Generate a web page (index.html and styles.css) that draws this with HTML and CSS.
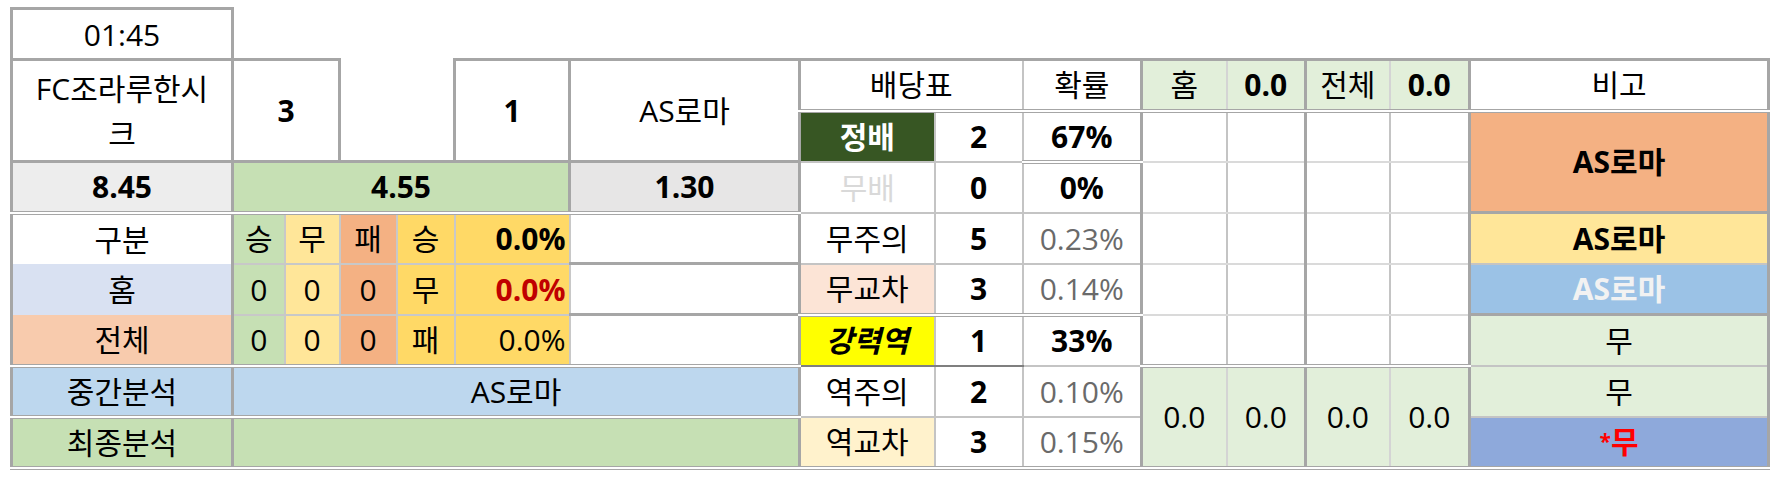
FILE: index.html
```html
<!DOCTYPE html>
<html lang="ko">
<head>
<meta charset="utf-8">
<title>경기 분석표</title>
<link rel="stylesheet" href="styles.css">
</head>
<body>
<table class="sheet">
  <colgroup>
    <col class="w-a"><col class="w-b"><col class="w-c"><col class="w-d"><col class="w-e">
    <col class="w-f"><col class="w-g"><col class="w-h"><col class="w-i"><col class="w-j">
    <col class="w-k"><col class="w-l"><col class="w-m"><col class="w-n"><col class="w-o">
  </colgroup>
  <tr>
    <td class="time L R T B">01:45</td>
    <td class="void" colspan="14"></td>
  </tr>
  <tr>
    <td class="team L R T B" rowspan="2">FC조라루한시크</td>
    <td class="b R T B" colspan="2" rowspan="2">3</td>
    <td class="gapcell R B" colspan="2" rowspan="2"></td>
    <td class="b R T B" rowspan="2">1</td>
    <td class="R T B" rowspan="2">AS로마</td>
    <td class="T DB" colspan="2">배당표</td>
    <td class="T R DB">확률</td>
    <td class="mint T DB soft-r">홈</td>
    <td class="mint b T DB R">0.0</td>
    <td class="mint T DB soft-r">전체</td>
    <td class="mint b T DB R">0.0</td>
    <td class="T R DB">비고</td>
  </tr>
  <tr>
    <td class="jb b">정배</td>
    <td class="b">2</td>
    <td class="b R DB">67%</td>
    <td class="soft"></td><td class="soft R"></td><td class="soft"></td><td class="soft R"></td>
    <td class="orange b R B" rowspan="2">AS로마</td>
  </tr>
  <tr>
    <td class="gray1 b L R DB">8.45</td>
    <td class="green b R DB" colspan="5">4.55</td>
    <td class="gray2 b R DB">1.30</td>
    <td class="faint">무배</td>
    <td class="b">0</td>
    <td class="b R">0%</td>
    <td class="soft"></td><td class="soft R"></td><td class="soft"></td><td class="soft R"></td>
  </tr>
  <tr>
    <td class="L R nob">구분</td>
    <td class="green lt">승</td>
    <td class="ylw lt">무</td>
    <td class="org lt">패</td>
    <td class="gold lt">승</td>
    <td class="gold b num R lt">0.0%</td>
    <td class="R B"></td>
    <td>무주의</td>
    <td class="b">5</td>
    <td class="pct R">0.23%</td>
    <td class="soft"></td><td class="soft R"></td><td class="soft"></td><td class="soft R"></td>
    <td class="ylw b R">AS로마</td>
  </tr>
  <tr>
    <td class="lav L R nob">홈</td>
    <td class="green lt">0</td>
    <td class="ylw lt">0</td>
    <td class="org lt">0</td>
    <td class="gold lt">무</td>
    <td class="gold b num red R lt">0.0%</td>
    <td class="R B"></td>
    <td class="peach">무교차</td>
    <td class="b">3</td>
    <td class="pct R">0.14%</td>
    <td class="soft"></td><td class="soft R"></td><td class="soft"></td><td class="soft R"></td>
    <td class="sky b R B">AS로마</td>
  </tr>
  <tr>
    <td class="salmon L R nob">전체</td>
    <td class="green lt">0</td>
    <td class="ylw lt">0</td>
    <td class="org lt">0</td>
    <td class="gold lt">패</td>
    <td class="gold num R lt">0.0%</td>
    <td class="R"></td>
    <td class="strong DT dark-b">강력역</td>
    <td class="b DT dark-b">1</td>
    <td class="b R DT">33%</td>
    <td class="soft"></td><td class="soft R"></td><td class="soft"></td><td class="soft R"></td>
    <td class="mint R">무</td>
  </tr>
  <tr>
    <td class="blue L R DT DB">중간분석</td>
    <td class="blue R DT DB" colspan="6">AS로마</td>
    <td>역주의</td>
    <td class="b">2</td>
    <td class="pct R">0.10%</td>
    <td class="mint soft-r DT DB" rowspan="2">0.0</td>
    <td class="mint R DT DB" rowspan="2">0.0</td>
    <td class="mint soft-r DT DB" rowspan="2">0.0</td>
    <td class="mint R DT DB" rowspan="2">0.0</td>
    <td class="mint R">무</td>
  </tr>
  <tr>
    <td class="green L R DB">최종분석</td>
    <td class="green R DB" colspan="6"></td>
    <td class="cream DB">역교차</td>
    <td class="b DB">3</td>
    <td class="pct R DB">0.15%</td>
    <td class="navy b R DB"><span class="star">*</span>무</td>
  </tr>
</table>
</body>
</html>
```

FILE: styles.css
```css
html, body {
  margin: 0;
  padding: 0;
  background: #ffffff;
}

body {
  font-family: "Open Sans", "Noto Sans CJK KR", sans-serif;
  color: #000000;
}

.sheet {
  border-collapse: collapse;
  table-layout: fixed;
  width: 1757px;
  margin: 7px 0 0 10px;
  font-size: 30px;
}

.w-a { width: 221px; }
.w-b { width: 52px; }
.w-c { width: 55px; }
.w-d { width: 57px; }
.w-e { width: 58px; }
.w-f { width: 115px; }
.w-g { width: 230px; }
.w-h { width: 135px; }
.w-i { width: 88px; }
.w-j { width: 119px; }
.w-k { width: 85px; }
.w-l { width: 79px; }
.w-m { width: 84px; }
.w-n { width: 80px; }
.w-o { width: 299px; }

.sheet tr {
  height: 51px;
}

.sheet td {
  padding: 0 3px;
  text-align: center;
  vertical-align: middle;
  line-height: 1.5;
  white-space: nowrap;
  overflow: hidden;
  border: 2px solid #c4c4c4;
}

/* thick & double grid lines */
.sheet td.L { border-left: 3px solid #a6a6a6; }
.sheet td.R { border-right: 3px solid #a6a6a6; }
.sheet td.T { border-top: 3px solid #a6a6a6; }
.sheet td.B { border-bottom: 3px solid #a6a6a6; }
.sheet td.DT { border-top: 4px double #a6a6a6; }
.sheet td.DB { border-bottom: 4px double #a6a6a6; }
.sheet td.nob { border-top: 0; border-bottom: 0; }
.sheet td.dark-b { border-bottom: 2px solid #7f7f7f; }

.sheet td.void {
  border: 0;
}

.sheet td.gapcell {
  border-top: 0;
}

.sheet td.soft {
  border-top: 2px solid #dadada;
  border-bottom: 2px solid #dadada;
  border-left: 2px solid #dadada;
}

.sheet td.soft-r { border-right: 2px solid #d4d4d4; }
.sheet td.lt { border: 2px solid #c8c8c8; }

.sheet td.team {
  white-space: normal;
  padding: 0 14px;
}

.b { font-weight: 700; }
.sheet td.num { text-align: right; }
.red { color: #c00000; }
.pct { color: #6a6a6a; }
.faint { color: #d9d9d9; }

.gray1 { background: #ededed; }
.gray2 { background: #e7e6e6; }
.green { background: #c6e0b4; }
.ylw { background: #ffe699; }
.org { background: #f4b183; }
.gold { background: #ffd966; }
.lav { background: #d9e1f2; }
.salmon { background: #f8cbad; }
.blue { background: #bdd7ee; }
.mint { background: #e2efda; }
.peach { background: #fce4d6; }
.cream { background: #fff2cc; }
.orange { background: #f4b183; }
.sky { background: #9bc2e6; color: #f2f2f2; }
.navy { background: #8ea9db; color: #ff0000; }

.jb {
  background: #375623;
  color: #ffffff;
}

.strong {
  background: #ffff00;
  font-weight: 700;
  font-style: italic;
}

.star {
  font-size: 0.7em;
  vertical-align: 0.2em;
}
```
